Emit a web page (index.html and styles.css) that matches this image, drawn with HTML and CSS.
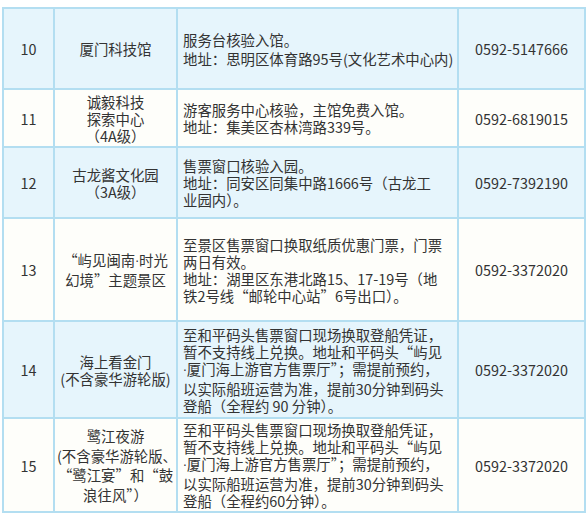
FILE: index.html
```html
<!DOCTYPE html>
<html lang="zh-CN">
<head>
<meta charset="utf-8">
<link rel="stylesheet" href="styles.css">
</head>
<body>
<table class="venues">
  <colgroup>
    <col class="c-no">
    <col class="c-name">
    <col class="c-desc">
    <col class="c-tel">
  </colgroup>
  <tbody>
    <tr class="row blue h10">
      <td class="no">10</td>
      <td class="name">厦门科技馆</td>
      <td class="desc loose">服务台核验入馆。<br>地址：思明区体育路95号(文化艺术中心内)</td>
      <td class="tel">0592-5147666</td>
    </tr>
    <tr class="row white h11">
      <td class="no">11</td>
      <td class="name">诚毅科技<br>探索中心<br>（4A级）</td>
      <td class="desc">游客服务中心核验，主馆免费入馆。<br>地址：集美区杏林湾路339号。</td>
      <td class="tel">0592-6819015</td>
    </tr>
    <tr class="row blue h12">
      <td class="no">12</td>
      <td class="name">古龙酱文化园<br>（3A级）</td>
      <td class="desc">售票窗口核验入园。<br>地址：同安区同集中路1666号（古龙工<br>业园内）。</td>
      <td class="tel">0592-7392190</td>
    </tr>
    <tr class="row white h13">
      <td class="no">13</td>
      <td class="name mid">“屿见闽南<span class="dot">·</span>时光<br>幻境”主题景区</td>
      <td class="desc">至景区售票窗口换取纸质优惠门票，门票<br>两日有效。<br>地址：湖里区东港北路15、17-19号（地<br>铁2号线“邮轮中心站”6号出口）。</td>
      <td class="tel">0592-3372020</td>
    </tr>
    <tr class="row blue h14">
      <td class="no">14</td>
      <td class="name">海上看金门<br>(不含豪华游轮版)</td>
      <td class="desc">至和平码头售票窗口现场换取登船凭证，<br>暂不支持线上兑换。地址和平码头“屿见<br><span class="dot">·</span>厦门海上游官方售票厅”；需提前预约，<br>以实际船班运营为准，提前30分钟到码头<br>登船（全程约 90 分钟）。</td>
      <td class="tel">0592-3372020</td>
    </tr>
    <tr class="row white h15">
      <td class="no">15</td>
      <td class="name loose2">鹭江夜游<br>(不含豪华游轮版、<br>“鹭江宴”和“鼓<br>浪往风”）</td>
      <td class="desc">至和平码头售票窗口现场换取登船凭证，<br>暂不支持线上兑换。地址和平码头“屿见<br><span class="dot">·</span>厦门海上游官方售票厅”；需提前预约，<br>以实际船班运营为准，提前30分钟到码头<br>登船（全程约60分钟）。</td>
      <td class="tel">0592-3372020</td>
    </tr>
  </tbody>
</table>
</body>
</html>
```
FILE: styles.css
```css
html, body {
  margin: 0;
  padding: 0;
  background: #ffffff;
}

body {
  font-family: "Noto Sans CJK SC", "Noto Sans", sans-serif;
  font-size: 14.4px;
  color: #333333;
}

.venues {
  border-collapse: collapse;
  table-layout: fixed;
  width: 582px;
  margin: 7px 0 0 2px;
}

.c-no { width: 51px; }
.c-name { width: 123px; }
.c-desc { width: 281px; }
.c-tel { width: 127px; }

.venues td {
  border: 2px solid #b3def1;
  padding: 0 2px;
  line-height: 17px;
  vertical-align: middle;
  white-space: nowrap;
}

.row.blue { background: #e6f5fc; }
.row.white { background: #fefefa; }

.h10 { height: 81px; }
.h11 { height: 58px; }
.h12 { height: 71px; }
.h13 { height: 103px; }
.h14 { height: 97px; }
.h15 { height: 94px; }

.no {
  text-align: center;
}

.name {
  text-align: center;
}

.venues td.name.mid { line-height: 18px; }
.venues td.name.loose2 { line-height: 19.5px; }

.dot {
  font-family: "DejaVu Sans", sans-serif;
  font-size: 12px;
}

.venues td.desc {
  padding: 0 5px 0 5px;
  text-align: left;
}

.venues td.desc.loose { line-height: 19px; }

.tel {
  text-align: center;
}
```
